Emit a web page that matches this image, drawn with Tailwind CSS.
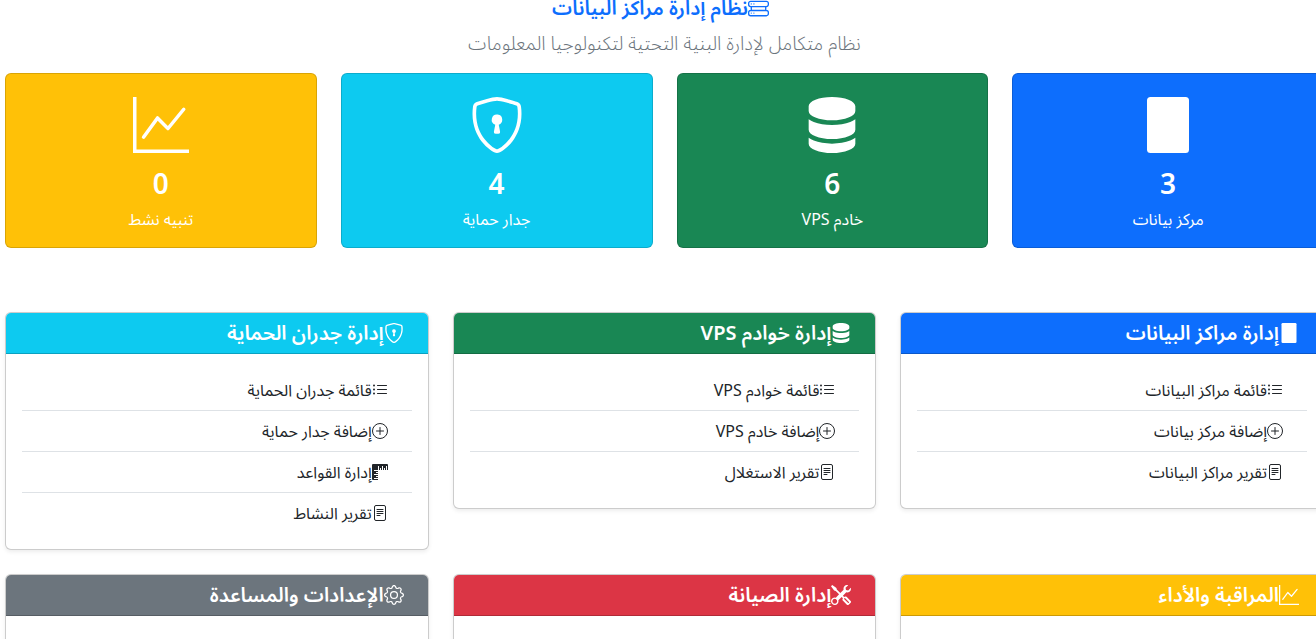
<!DOCTYPE html>
<html lang="ar" dir="rtl">
<head>
<meta charset="utf-8">
<meta name="viewport" content="width=device-width, initial-scale=1">
<title>نظام إدارة مراكز البيانات</title>
<script src="https://cdn.jsdelivr.net/npm/@tailwindcss/browser@4"></script>
</head>
<body class="overflow-x-hidden bg-white font-['Noto_Sans','Noto_Sans_Arabic','DejaVu_Sans_Condensed','DejaVu_Sans',sans-serif] text-base text-[#212529]">
<svg class="hidden" aria-hidden="true">
  <symbol id="rack" viewBox="0 0 16 16"><path fill="none" stroke="currentColor" d="M2 2.500h12a1.500 1.500 0 0 1 1.500 1.500v1a1.500 1.500 0 0 1-1.500 1.500H2A1.500 1.500 0 0 1 .5 5V4A1.500 1.500 0 0 1 2 2.500zM2 9.500h12a1.500 1.500 0 0 1 1.500 1.500v1a1.500 1.500 0 0 1-1.500 1.500H2A1.500 1.500 0 0 1 .5 12v-1A1.500 1.500 0 0 1 2 9.500zM2.500 6.500v3M13.500 6.500v3"/><circle cx="2.500" cy="4.500" r=".5"/><circle cx="4.500" cy="4.500" r=".5"/><circle cx="2.500" cy="11.500" r=".5"/><circle cx="4.500" cy="11.500" r=".5"/></symbol>
  <symbol id="building" viewBox="0 0 16 16"><rect x="2" width="12" height="16" rx="1"/></symbol>
  <symbol id="server" viewBox="0 0 16 16"><path d="M1.333 2.667C1.333 1.194 4.318 0 8 0s6.667 1.194 6.667 2.667V4c0 1.473-2.985 2.667-6.667 2.667S1.333 5.473 1.333 4zM1.333 6.334v3C1.333 10.805 4.318 12 8 12s6.667-1.194 6.667-2.667V6.334a6.500 6.500 0 0 1-1.458.79C11.810 7.684 9.967 8 8 8s-3.809-.317-5.208-.876a6.500 6.500 0 0 1-1.458-.79zM14.667 11.668a6.500 6.500 0 0 1-1.458.789c-1.400.56-3.242.876-5.210.876-1.966 0-3.809-.316-5.208-.876a6.500 6.500 0 0 1-1.458-.79v1.666C1.333 14.806 4.318 16 8 16s6.667-1.194 6.667-2.667z"/></symbol>
  <symbol id="shield" viewBox="0 0 16 16"><path d="M5.338 1.590a61 61 0 0 0-2.837.856.48.48 0 0 0-.328.39c-.554 4.157.726 7.190 2.253 9.188a10.700 10.700 0 0 0 2.287 2.233c.346.244.652.42.893.533q.18.085.293.118a1 1 0 0 0 .101.025 1 1 0 0 0 .1-.025q.114-.034.294-.118c.24-.113.547-.29.893-.533a10.700 10.700 0 0 0 2.287-2.233c1.527-1.997 2.807-5.031 2.253-9.188a.48.48 0 0 0-.328-.39c-.651-.213-1.750-.56-2.837-.855C9.552 1.290 8.531 1.067 8 1.067c-.53 0-1.552.223-2.662.524zM5.072.56C6.157.265 7.310 0 8 0s1.843.265 2.928.56c1.110.3 2.229.655 2.887.87a1.540 1.540 0 0 1 1.044 1.262c.596 4.477-.787 7.795-2.465 9.990a11.800 11.800 0 0 1-2.517 2.453 7 7 0 0 1-1.048.625c-.28.132-.581.24-.829.24s-.548-.108-.829-.24a7 7 0 0 1-1.048-.625 11.800 11.800 0 0 1-2.517-2.453C1.928 10.487.545 7.169 1.141 2.692A1.540 1.540 0 0 1 2.185 1.430 63 63 0 0 1 5.072.56"/><path d="M9.500 6.500a1.500 1.500 0 0 1-1 1.415l.385 1.990a.5.5 0 0 1-.491.595h-.788a.5.5 0 0 1-.49-.595l.384-1.990a1.500 1.500 0 1 1 2-1.415"/></symbol>
  <symbol id="graph" viewBox="0 0 16 16"><path d="M0 0h1v15h15v1H0zm14.817 3.113a.5.5 0 0 1 .07.704l-4.500 5.500a.5.5 0 0 1-.74.037L7.060 6.767l-3.656 5.027a.5.5 0 0 1-.808-.588l4-5.500a.5.5 0 0 1 .758-.06l2.609 2.610 4.150-5.073a.5.5 0 0 1 .704-.07"/></symbol>
  <symbol id="list" viewBox="0 0 16 16"><path fill="none" stroke="currentColor" stroke-linecap="round" d="M5.500 3.500h9M5.500 7.500h9M5.500 11.500h9"/><circle cx="2" cy="3.500" r="1"/><circle cx="2" cy="7.500" r="1"/><circle cx="2" cy="11.500" r="1"/></symbol>
  <symbol id="plus" viewBox="0 0 16 16"><path fill="none" stroke="currentColor" stroke-linecap="round" d="M8 4.500v7M4.500 8h7"/><circle cx="8" cy="8" r="7.500" fill="none" stroke="currentColor"/></symbol>
  <symbol id="file" viewBox="0 0 16 16"><rect x="2.500" y=".5" width="11" height="15" rx="1.500" fill="none" stroke="currentColor"/><path fill="none" stroke="currentColor" stroke-linecap="round" d="M5 4.500h6M5 6.500h6M5 8.500h6M5 10.500h3"/></symbol>
  <symbol id="rulers" viewBox="0 0 16 16"><path d="M1 0a1 1 0 0 0-1 1v14a1 1 0 0 0 1 1h5v-1H2v-1h4v-1H4v-1h2v-1H2v-1h4V9H4V8h2V7H2V6h4V2h1v4h1V4h1v2h1V2h1v4h1V4h1v2h1V2h1v4h1V1a1 1 0 0 0-1-1z"/></symbol>
  <symbol id="tools" viewBox="0 0 16 16"><path fill-rule="evenodd" d="M1 0 0 1l2.200 3.081a1 1 0 0 0 .815.419h.07a1 1 0 0 1 .708.293l2.675 2.675-2.617 2.654A3.003 3.003 0 0 0 0 13a3 3 0 1 0 5.878-.851l2.654-2.617.968.968-.305.914a1 1 0 0 0 .242 1.023l3.270 3.270a.997.997 0 0 0 1.414 0l1.586-1.586a.997.997 0 0 0 0-1.414l-3.270-3.270a1 1 0 0 0-1.023-.242L10.500 9.500l-.96-.96 2.680-2.643A3.005 3.005 0 0 0 16 3q0-.405-.102-.777l-2.140 2.141L12 4l-.364-1.757L13.777.102a3 3 0 0 0-3.675 3.680L7.462 6.460 4.793 3.793a1 1 0 0 1-.293-.707v-.071a1 1 0 0 0-.419-.814zm9.646 10.646a.5.5 0 0 1 .708 0l2.914 2.915a.5.5 0 0 1-.707.707l-2.915-2.914a.5.5 0 0 1 0-.708M3 11l.471.242.529.026.287.445.445.287.026.529L5 13l-.242.471-.026.529-.445.287-.287.445-.529.026L3 15l-.471-.242L2 14.732l-.287-.445L1.268 14l-.026-.529L1 13l.242-.471.026-.529.445-.287.287-.445.529-.026z"/></symbol>
  <symbol id="gear" viewBox="0 0 16 16"><path d="M8 4.754a3.246 3.246 0 1 0 0 6.492 3.246 3.246 0 0 0 0-6.492M5.754 8a2.246 2.246 0 1 1 4.492 0 2.246 2.246 0 0 1-4.492 0"/><path d="M9.796 1.343c-.527-1.790-3.065-1.790-3.592 0l-.094.319a.873.873 0 0 1-1.255.52l-.292-.16c-1.640-.892-3.433.902-2.540 2.541l.159.292a.873.873 0 0 1-.52 1.255l-.319.094c-1.790.527-1.790 3.065 0 3.592l.319.094a.873.873 0 0 1 .52 1.255l-.16.292c-.892 1.640.901 3.434 2.541 2.540l.292-.159a.873.873 0 0 1 1.255.52l.094.319c.527 1.790 3.065 1.790 3.592 0l.094-.319a.873.873 0 0 1 1.255-.52l.292.16c1.640.893 3.434-.902 2.540-2.541l-.159-.292a.873.873 0 0 1 .52-1.255l.319-.094c1.790-.527 1.790-3.065 0-3.592l-.319-.094a.873.873 0 0 1-.52-1.255l.16-.292c.893-1.640-.902-3.433-2.541-2.540l-.292.159a.873.873 0 0 1-1.255-.52zm-2.633.283c.246-.835 1.428-.835 1.674 0l.094.319a1.873 1.873 0 0 0 2.693 1.115l.291-.16c.764-.415 1.600.42 1.184 1.185l-.159.292a1.873 1.873 0 0 0 1.116 2.692l.318.094c.835.246.835 1.428 0 1.674l-.319.094a1.873 1.873 0 0 0-1.115 2.693l.16.291c.415.764-.42 1.600-1.185 1.184l-.291-.159a1.873 1.873 0 0 0-2.693 1.116l-.094.318c-.246.835-1.428.835-1.674 0l-.094-.319a1.873 1.873 0 0 0-2.692-1.115l-.292.16c-.764.415-1.600-.42-1.184-1.185l.159-.291A1.873 1.873 0 0 0 1.945 8.930l-.319-.094c-.835-.246-.835-1.428 0-1.674l.319-.094A1.873 1.873 0 0 0 3.060 4.377l-.16-.292c-.415-.764.42-1.600 1.185-1.184l.292.159a1.873 1.873 0 0 0 2.692-1.115z"/></symbol>
</svg>

<main class="-mr-2 pl-[5px]">
  <header class="-mt-1 flex flex-col items-center">
    <h1 class="flex h-6 items-center pr-2 text-[20px] leading-6 font-semibold text-[#0d6efd]"><svg class="size-[21px] shrink-0 fill-current" aria-hidden="true"><use href="#rack"/></svg>نظام إدارة مراكز البيانات</h1>
    <p class="mt-2 mb-[15px] text-[19px] leading-[30px] font-light text-[#6c757d]">نظام متكامل لإدارة البنية التحتية لتكنولوجيا المعلومات</p>
  </header>

  <section class="grid grid-cols-4 gap-6 text-center text-white" aria-label="إحصائيات">
    <div class="flex flex-col items-center rounded-md border border-black/15 bg-[#0d6efd] pt-[23px] pb-4">
      <svg class="size-14 fill-current" aria-hidden="true"><use href="#building"/></svg>
      <p class="mt-3 text-[28px] leading-9 font-semibold">3</p>
      <p class="mt-1.5 leading-6">مركز بيانات</p>
    </div>
    <div class="flex flex-col items-center rounded-md border border-black/15 bg-[#198754] pt-[23px] pb-4">
      <svg class="size-14 fill-current" aria-hidden="true"><use href="#server"/></svg>
      <p class="mt-3 text-[28px] leading-9 font-semibold">6</p>
      <p class="mt-1.5 leading-6">خادم VPS</p>
    </div>
    <div class="flex flex-col items-center rounded-md border border-black/15 bg-[#0dcaf0] pt-[23px] pb-4">
      <svg class="size-14 fill-current" aria-hidden="true"><use href="#shield"/></svg>
      <p class="mt-3 text-[28px] leading-9 font-semibold">4</p>
      <p class="mt-1.5 leading-6">جدار حماية</p>
    </div>
    <div class="flex flex-col items-center rounded-md border border-black/15 bg-[#ffc107] pt-[23px] pb-4">
      <svg class="size-14 fill-current" aria-hidden="true"><use href="#graph"/></svg>
      <p class="mt-3 text-[28px] leading-9 font-semibold">0</p>
      <p class="mt-1.5 leading-6">تنبيه نشط</p>
    </div>
  </section>

  <div class="mt-16 grid grid-cols-3 items-start gap-6">
    <section class="rounded-md border border-black/20 bg-white shadow-[0_2px_4px_rgba(0,0,0,0.075)]">
      <h2 class="flex h-[41px] items-center rounded-t-[5px] border-b border-black/20 bg-[#0d6efd] px-6 text-[20px] leading-6 font-semibold text-white"><svg class="size-5 shrink-0 fill-current" aria-hidden="true"><use href="#building"/></svg>إدارة مراكز البيانات</h2>
      <ul class="divide-y divide-[#dee2e6] p-4">
        <li><a href="#" class="flex h-10 items-center px-6"><svg class="size-4 shrink-0 fill-current" aria-hidden="true"><use href="#list"/></svg>قائمة مراكز البيانات</a></li>
        <li><a href="#" class="flex h-10 items-center px-6"><svg class="size-4 shrink-0 fill-current" aria-hidden="true"><use href="#plus"/></svg>إضافة مركز بيانات</a></li>
        <li><a href="#" class="flex h-10 items-center px-6"><svg class="size-4 shrink-0 fill-current" aria-hidden="true"><use href="#file"/></svg>تقرير مراكز البيانات</a></li>
      </ul>
    </section>
    <section class="rounded-md border border-black/20 bg-white shadow-[0_2px_4px_rgba(0,0,0,0.075)]">
      <h2 class="flex h-[41px] items-center rounded-t-[5px] border-b border-black/20 bg-[#198754] px-6 text-[20px] leading-6 font-semibold text-white"><svg class="size-5 shrink-0 fill-current" aria-hidden="true"><use href="#server"/></svg>إدارة خوادم VPS</h2>
      <ul class="divide-y divide-[#dee2e6] p-4">
        <li><a href="#" class="flex h-10 items-center px-6"><svg class="size-4 shrink-0 fill-current" aria-hidden="true"><use href="#list"/></svg>قائمة خوادم VPS</a></li>
        <li><a href="#" class="flex h-10 items-center px-6"><svg class="size-4 shrink-0 fill-current" aria-hidden="true"><use href="#plus"/></svg>إضافة خادم VPS</a></li>
        <li><a href="#" class="flex h-10 items-center px-6"><svg class="size-4 shrink-0 fill-current" aria-hidden="true"><use href="#file"/></svg>تقرير الاستغلال</a></li>
      </ul>
    </section>
    <section class="rounded-md border border-black/20 bg-white shadow-[0_2px_4px_rgba(0,0,0,0.075)]">
      <h2 class="flex h-[41px] items-center rounded-t-[5px] border-b border-black/20 bg-[#0dcaf0] px-6 text-[20px] leading-6 font-semibold text-white"><svg class="size-5 shrink-0 fill-current" aria-hidden="true"><use href="#shield"/></svg>إدارة جدران الحماية</h2>
      <ul class="divide-y divide-[#dee2e6] p-4">
        <li><a href="#" class="flex h-10 items-center px-6"><svg class="size-4 shrink-0 fill-current" aria-hidden="true"><use href="#list"/></svg>قائمة جدران الحماية</a></li>
        <li><a href="#" class="flex h-10 items-center px-6"><svg class="size-4 shrink-0 fill-current" aria-hidden="true"><use href="#plus"/></svg>إضافة جدار حماية</a></li>
        <li><a href="#" class="flex h-10 items-center px-6"><svg class="size-4 shrink-0 fill-current" aria-hidden="true"><use href="#rulers"/></svg>إدارة القواعد</a></li>
        <li><a href="#" class="flex h-10 items-center px-6"><svg class="size-4 shrink-0 fill-current" aria-hidden="true"><use href="#file"/></svg>تقرير النشاط</a></li>
      </ul>
    </section>
    <section class="rounded-md border border-black/20 bg-white pb-8 shadow-[0_2px_4px_rgba(0,0,0,0.075)]">
      <h2 class="flex h-[41px] items-center rounded-t-[5px] border-b border-black/20 bg-[#ffc107] px-6 text-[20px] leading-6 font-semibold text-white"><svg class="size-5 shrink-0 fill-current" aria-hidden="true"><use href="#graph"/></svg>المراقبة والأداء</h2>
    </section>
    <section class="rounded-md border border-black/20 bg-white pb-8 shadow-[0_2px_4px_rgba(0,0,0,0.075)]">
      <h2 class="flex h-[41px] items-center rounded-t-[5px] border-b border-black/20 bg-[#dc3545] px-6 text-[20px] leading-6 font-semibold text-white"><svg class="size-5 shrink-0 fill-current" aria-hidden="true"><use href="#tools"/></svg>إدارة الصيانة</h2>
    </section>
    <section class="rounded-md border border-black/20 bg-white pb-8 shadow-[0_2px_4px_rgba(0,0,0,0.075)]">
      <h2 class="flex h-[41px] items-center rounded-t-[5px] border-b border-black/20 bg-[#6c757d] px-6 text-[20px] leading-6 font-semibold text-white"><svg class="size-5 shrink-0 fill-current" aria-hidden="true"><use href="#gear"/></svg>الإعدادات والمساعدة</h2>
    </section>
  </div>
</main>
</body>
</html>
